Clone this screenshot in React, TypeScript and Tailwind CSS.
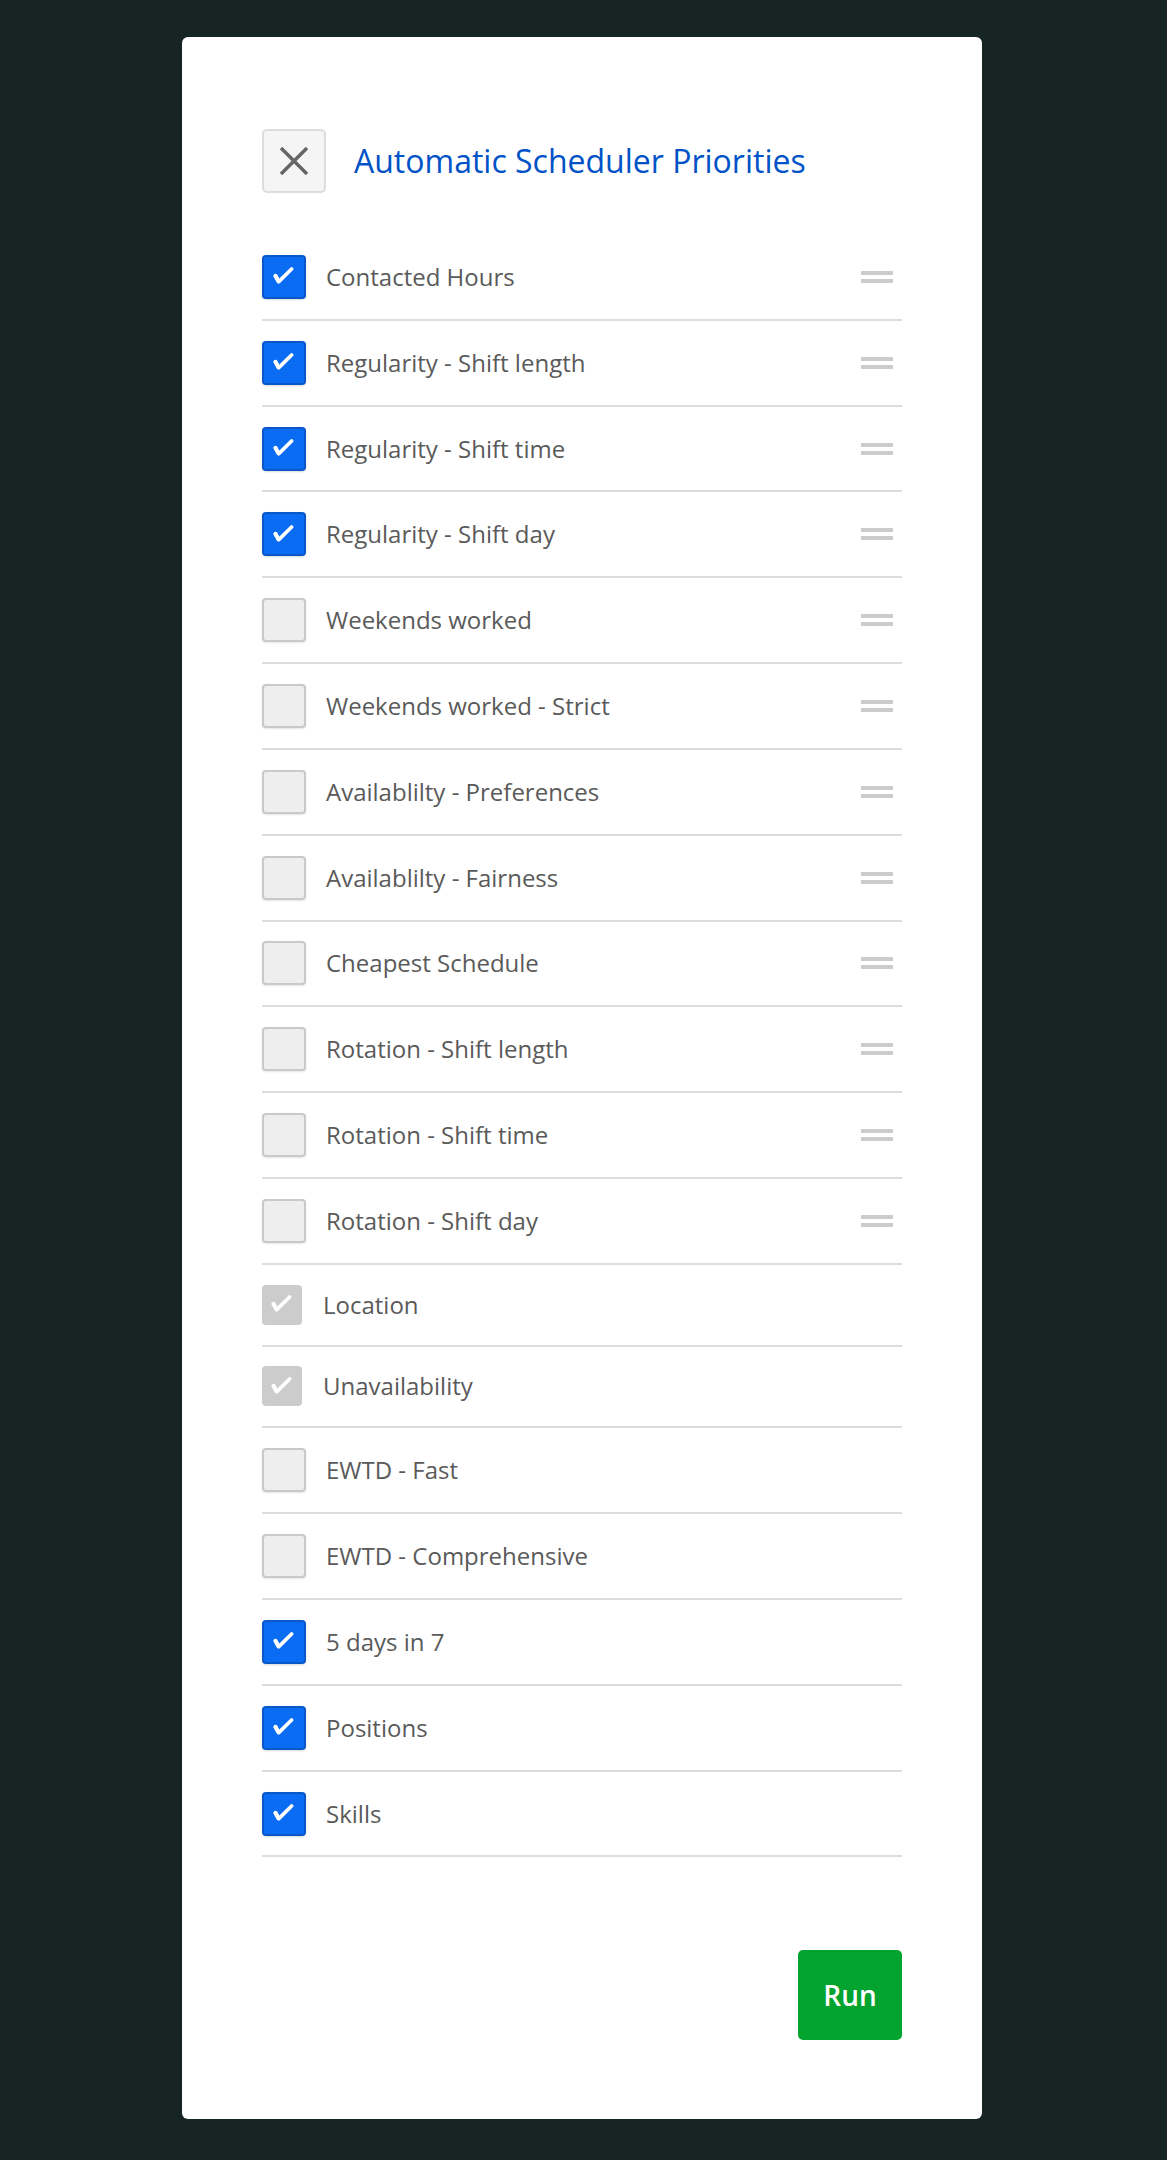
import React from "react";

type Item = { label: string; state: "on" | "off" | "locked"; drag: boolean };

const items: Item[] = [
  { label: "Contacted Hours", state: "on", drag: true },
  { label: "Regularity - Shift length", state: "on", drag: true },
  { label: "Regularity - Shift time", state: "on", drag: true },
  { label: "Regularity - Shift day", state: "on", drag: true },
  { label: "Weekends worked", state: "off", drag: true },
  { label: "Weekends worked - Strict", state: "off", drag: true },
  { label: "Availablilty - Preferences", state: "off", drag: true },
  { label: "Availablilty - Fairness", state: "off", drag: true },
  { label: "Cheapest Schedule", state: "off", drag: true },
  { label: "Rotation - Shift length", state: "off", drag: true },
  { label: "Rotation - Shift time", state: "off", drag: true },
  { label: "Rotation - Shift day", state: "off", drag: true },
  { label: "Location", state: "locked", drag: false },
  { label: "Unavailability", state: "locked", drag: false },
  { label: "EWTD - Fast", state: "off", drag: false },
  { label: "EWTD - Comprehensive", state: "off", drag: false },
  { label: "5 days in 7", state: "on", drag: false },
  { label: "Positions", state: "on", drag: false },
  { label: "Skills", state: "on", drag: false },
];

// heavy brush-style check mark
function Tick() {
  return (
    <svg width="22" height="19" viewBox="0 0 22 19" className="-ml-[3px] -mt-[2px]">
      <path d="M3.4 9.6L6.8 15.6L19.6 3" fill="none" stroke="white" strokeWidth="3.6" strokeLinecap="round" strokeLinejoin="round" />
      <path d="M1.4 10.2C2 7.6 4.6 7.4 5.6 9.4L8.2 14.4L6.6 17.4C5.8 17.6 5.2 17.2 4.8 16.6Z" fill="white" />
    </svg>
  );
}

function Box({ state }: { state: Item["state"] }) {
  if (state === "locked") {
    return (
      <div className="flex h-[40px] w-[40px] shrink-0 items-center justify-center rounded-[4px] bg-[#cccccc]">
        <Tick />
      </div>
    );
  }
  if (state === "on") {
    return (
      <div className="flex h-[44px] w-[44px] shrink-0 items-center justify-center rounded-[4px] border-2 border-[#0a57c9] bg-[#0a6cf3] shadow-[0_1px_2px_rgba(0,0,0,0.15)]">
        <Tick />
      </div>
    );
  }
  return (
    <div className="h-[44px] w-[44px] shrink-0 rounded-[4px] border-2 border-[#c9c9c9] bg-[#eeeeee] shadow-[0_1px_2px_rgba(0,0,0,0.1)]" />
  );
}

function Handle() {
  return (
    <div className="mr-[9px] flex w-[32px] flex-col gap-[4px]">
      <div className="h-[4px] bg-[#cccccc]" />
      <div className="h-[4px] bg-[#cccccc]" />
    </div>
  );
}

export default function App() {
  return (
    <div className="min-h-[2160px] bg-[#172424] pt-[37px] pb-[40px] font-['Open_Sans',sans-serif]">
      <div className="ml-[182px] w-[800px] rounded-[6px] bg-white px-[80px] pt-[92px] pb-[79px]">
        <div className="flex items-center gap-[28px]">
          <button className="flex h-[64px] w-[64px] items-center justify-center rounded-[5px] border-2 border-[#dddddd] bg-[#f5f5f5]">
            <svg width="28" height="28" viewBox="0 0 28 28" stroke="#666666" strokeWidth="3.5">
              <path d="M1 1L27 27M27 1L1 27" />
            </svg>
          </button>
          <h1 className="text-[32px] text-[#0052c6]">Automatic Scheduler Priorities</h1>
        </div>

        <div className="mt-[42px]">
          {items.map((it) => (
            <div
              key={it.label}
              className="flex items-center border-b-2 border-[#dddddd] py-[19.92px]"
            >
              <Box state={it.state} />
              <span
                className={
                  (it.state === "locked" ? "ml-[21px]" : "ml-[20px]") +
                  " flex-1 text-[24px] leading-[32px] text-[#5a5a5a]"
                }
              >
                {it.label}
              </span>
              {it.drag && <Handle />}
            </div>
          ))}
        </div>

        <div className="mt-[93px] flex justify-end">
          <button className="h-[90px] w-[104px] rounded-[5px] bg-[#03a32f] text-[28px] font-semibold text-white">
            Run
          </button>
        </div>
      </div>
    </div>
  );
}
